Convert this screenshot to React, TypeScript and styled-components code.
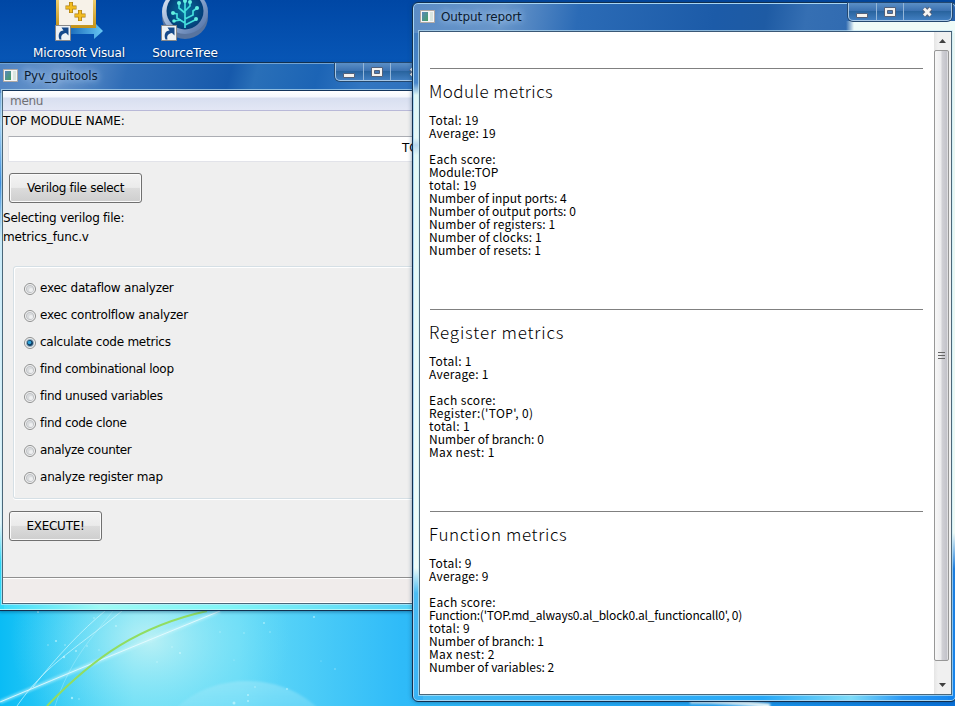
import React, { useState } from "react";
import styled, { createGlobalStyle, css } from "styled-components";

const GlobalStyle = createGlobalStyle`
  * { box-sizing: border-box; }
  html, body { margin: 0; padding: 0; overflow: hidden; }
  body { font-family: "DejaVu Sans", sans-serif; font-size: 12px; color: #000; }
`;

const Desktop = styled.main`
  position: relative;
  width: 955px;
  height: 706px;
  overflow: hidden;
  background: #0a58bb;
`;

const Wallpaper = styled.svg`
  position: absolute;
  inset: 0;
`;

const Shortcuts = styled.div`
  position: relative;
  display: flex;
  padding-left: 26px;
`;

const Shortcut = styled.div`
  width: 106px;
  display: flex;
  flex-direction: column;
  align-items: center;
  color: #fff;
  line-height: 16px;
  text-shadow: 0 1px 2px #002050;
  svg { display: block; height: 44px; margin-bottom: 1px; }
`;

const ShortcutLabel = styled.span<{ $track: number }>`
  letter-spacing: ${(p) => p.$track}px;
  white-space: nowrap;
`;

const Frame = styled.section<{ $report?: boolean }>`
  position: absolute;
  display: flex;
  flex-direction: column;
  border: 1px solid #12304f;
  ${(p) =>
    p.$report
      ? css`
          left: 412px; top: 2px; width: 545px; height: 700px;
          padding: 0 4px 6px 6px;
          border-radius: 6px;
          background:
            linear-gradient(90deg, transparent 433px, #effbf8 441px) 0 18px / 100% 12px no-repeat,
            linear-gradient(100deg, #5b8cc5 0, #6996ca 90px, #2b6bb6 165px, #1c5ba8 300px, #1e5ba4 350px, #356fb3 390px, #2862ac 100%) 0 0 / 100% 30px no-repeat,
            linear-gradient(180deg, #3f78bb 0, #4987ca 80px, #dff6f5 92px, #e5f7f6 135px, #b9d7ef 142px, #e3f8f6 152px, #eefbf8 565px, #4cbdf4 590px, #38b3f6 100%) 0 0 / 10px 100% no-repeat,
            linear-gradient(180deg, #e8f6f2 0, #eefaf5 530px, #1c7dde 566px, #1686ee 100%) right / 8px 100% no-repeat,
            linear-gradient(90deg, #47bdf5, #27a8f7 350px, #7edcf9 438px, #2b99f5 490px, #1686ed);
          box-shadow: inset 0 0 0 1px #a7d5f3, 0 0 4px #123c6688;
        `
      : css`
          left: -1px; top: 62px; width: 448px; height: 549px;
          padding: 0 6px 6px 2px;
          background:
            linear-gradient(105deg, #4f83c2 0, #6995cb 60px, #2f6db7 125px, #1659ab 225px, #296fb8 250px, #1c64b5 310px, #3276c1 355px, #2d70bc 100%) 0 0 / 100% 30px no-repeat,
            linear-gradient(180deg, #3675bd 0, #a6d2f4 60px, #3b8bda 120px, #c9eaf9 175px, #e6f7fa 460px, #28d4f4 500px, #33dafa 100%) 0 0 / 4px 100% no-repeat,
            linear-gradient(90deg, #3edcfb, #9efaf4 100px, #80f5f7 230px, #51cef7);
          box-shadow: inset 0 1px 0 #71a4d4, inset 0 -1px 0 #b2f6fa, 0 1px 3px #073a6580;
        `}
`;

const TitleBar = styled.header<{ $report?: boolean }>`
  height: ${(p) => (p.$report ? 28 : 27)}px;
  padding-right: ${(p) => (p.$report ? 0 : 1)}px;
  flex: none;
  display: flex;
  align-items: flex-start;
`;

const Caption = styled.div<{ $report?: boolean }>`
  display: flex;
  align-items: center;
  height: ${(p) => (p.$report ? 27 : 25)}px;
  gap: 6px;
  padding-left: 1px;
  flex: 1;
  color: #0b1b31;
  letter-spacing: -0.12px;
  text-shadow: 0 0 6px #a9c8ec, 0 0 9px #a9c8ec;
  svg { display: block; }
`;

const Controls = styled.div`
  display: flex;
  height: 18px;
  border: 1px solid #a7c7e5;
  border-top: 0;
  border-radius: 0 0 5px 5px;
  background: linear-gradient(#5b8fc6, #3a70b0 48%, #29649f 50%, #417ec0);
  box-shadow: 0 0 0 1px #24486f;
`;

const Control = styled.button<{ $w: number }>`
  width: ${(p) => p.$w}px;
  padding: 0 0 1px;
  border: 0;
  border-right: 1px solid #94b6d8;
  background: none;
  display: flex;
  align-items: center;
  justify-content: center;
  &:last-child { border-right: 0; }
`;

const Client = styled.div<{ $report?: boolean }>`
  flex: 1;
  min-height: 0;
  display: flex;
  flex-direction: ${(p) => (p.$report ? "row" : "column")};
  border: 1px solid #4b6779;
  border-top-color: ${(p) => (p.$report ? "#3a5876" : "#12345b")};
  background: ${(p) => (p.$report ? "#fff" : "#efefef")};
  box-shadow: 0 0 0 1px #c9ebf7a0;
`;

const MenuBar = styled.nav`
  height: 20px;
  flex: none;
  padding-left: 7px;
  border-bottom: 1px solid #b9b9d8;
  background: linear-gradient(#fff 0, #f4f7fd 6px, #d8dff0 7px, #e3e7f5 100%);
  color: #707074;
  line-height: 21px;
  letter-spacing: -0.3px;
`;

const Label = styled.div<{ $track: number }>`
  height: 19px;
  line-height: 21px;
  white-space: nowrap;
  letter-spacing: ${(p) => p.$track}px;
`;

const ModuleInput = styled.input`
  display: block;
  width: 423px;
  height: 26px;
  margin: 6px 0 11px 5px;
  padding: 0 4px 2px;
  border: 1px solid #e2e3e9;
  border-top-color: #abadb3;
  background: #fff;
  font: 12px "DejaVu Sans", sans-serif;
  text-align: right;
  outline: 0;
`;

const PushButton = styled.button<{ $w: number; $track: number }>`
  display: block;
  flex: none;
  width: ${(p) => p.$w}px;
  height: 30px;
  margin-left: 6px;
  padding: 0;
  border: 1px solid #707070;
  border-radius: 3px;
  background: linear-gradient(#f3f3f3, #ebebeb 48%, #dcdcdc 50%, #cecece);
  box-shadow: inset 0 0 0 1px #fafafa;
  font: 12px "DejaVu Sans", sans-serif;
  letter-spacing: ${(p) => p.$track}px;
  color: #000;
`;

const FileInfo = styled.div`
  padding-top: 5px;
`;

const Options = styled.div`
  width: 424px;
  height: 233px;
  flex: none;
  margin: 20px 0 12px 10px;
  padding: 7px 0 0 10px;
  border: 1px solid #d5dfe5;
  border-radius: 3px;
  box-shadow: inset 1px 1px 0 #fff, 0 1px 0 #fff;
`;

const Option = styled.div<{ $track: number }>`
  display: flex;
  align-items: center;
  gap: 4px;
  height: 27px;
  letter-spacing: ${(p) => p.$track}px;
  white-space: nowrap;
  svg { display: block; margin-top: 2px; }
`;

const StatusBar = styled.footer`
  height: 26px;
  margin-top: auto;
  border-top: 1px solid #8f8f8f;
  border-bottom: 1px solid #fff;
  background: #f0eceb;
  box-shadow: inset 0 1px 0 #fff;
`;

const Report = styled.article`
  flex: 1;
  padding: 36px 11px 0 10px;
  font-family: "Noto Sans CJK JP", sans-serif;
  font-weight: 400;
`;

const Section = styled.section<{ $h: number }>`
  height: ${(p) => p.$h}px;
  border-top: 1px solid #808080;
`;

const Heading = styled.h2<{ $track: number }>`
  margin: 12px 0 12px -1px;
  height: 20px;
  line-height: 20px;
  font-size: 17px;
  font-weight: 300;
  letter-spacing: ${(p) => p.$track}px;
`;

const Line = styled.div<{ $track?: number }>`
  height: 13px;
  margin-left: -1px;
  line-height: 13px;
  font-size: 12px;
  white-space: pre;
  letter-spacing: ${(p) => p.$track ?? 0.2}px;
`;

const ScrollBar = styled.div`
  width: 17px;
  padding-right: 1px;
  display: flex;
  flex-direction: column;
  background: linear-gradient(90deg, #e5e5e5, #f0f0f0 4px);
`;

const ScrollArrow = styled.div<{ $h: number }>`
  height: ${(p) => p.$h}px;
  flex: none;
  display: flex;
  align-items: center;
  justify-content: center;
`;

const Thumb = styled.div`
  width: 15px;
  flex: 1;
  display: flex;
  align-items: center;
  justify-content: center;
  border: 1px solid #979797;
  border-radius: 2px;
  background: linear-gradient(90deg, #f7f7f7 0, #ececee 45%, #d0d0d5 55%, #c3c3ca 90%, #eee 100%);
`;

const AppIcon = () => (
  <svg width="15" height="13" viewBox="0 0 15 13">
    <defs>
      <linearGradient id="pane" x2="1" y2="1">
        <stop stopColor="#5b86bd" /><stop offset="1" stopColor="#43a063" />
      </linearGradient>
    </defs>
    <path d="M.5.5h14v12H.5z" fill="#f4f5f6" stroke="#b0a9a4" />
    <path d="M2 2h6v9H2z" fill="url(#pane)" />
    <path d="M10 2h3v9h-3z" fill="#d9e5df" />
  </svg>
);

const WindowControls = () => (
  <Controls>
    <Control $w={28} aria-label="Minimize">
      <svg width="13" height="17"><path d="M.5 10.500h11v4h-11z" fill="#f6f3ef" stroke="#53617a" /></svg>
    </Control>
    <Control $w={27} aria-label="Maximize">
      <svg width="13" height="17">
        <path d="M.5 4.500h11v9h-11z" fill="#f6f3ef" stroke="#53617a" />
        <path d="M3.500 7.500h5v3h-5z" fill="#4a7bb6" stroke="#53617a" />
      </svg>
    </Control>
    <Control $w={47} aria-label="Close">
      <svg width="13" height="17">
        <path d="M3 5.500l6.500 7M9.500 5.500l-6.500 7" stroke="#53617a" strokeWidth="4.8" />
        <path d="M3 5.500l6.500 7M9.500 5.500l-6.500 7" stroke="#f8f5f2" strokeWidth="2.8" />
      </svg>
    </Control>
  </Controls>
);

const LinkArrow = () => (
  <g>
    <path d="M0 0h15v15H0z" fill="#eef2f5" stroke="#888" />
    <path d="M4 14C2 9 4 5 8 5L6 2h7v8L10.500 7.500C7 8 5 10 6 14z" fill="#164a8b" />
  </g>
);

const VisualStudioIcon = () => (
  <svg width="52" height="44" viewBox="1 0 52 44">
    <defs>
      <linearGradient id="arrow" x2="1"><stop stopColor="#1160b4" /><stop offset="1" stopColor="#67c8f4" /></linearGradient>
      <linearGradient id="gold" y2="1" x2="0"><stop stopColor="#f6d77b" /><stop offset="1" stopColor="#c39218" /></linearGradient>
    </defs>
    <path d="M14 27h29v-4l8 8-9 8v-5H14z" fill="url(#arrow)" />
    <path d="M4-5h40v33H4z" fill="url(#gold)" />
    <path d="M7-2h34v27H7z" fill="#f7f2e8" />
    <path d="M19 2v11M13.500 7.500h11M28 10v11M22.500 15.500h11" stroke="#a77b15" strokeWidth="4" />
    <path d="M19 2.500v10M14 7.500h10M28 10.500v10M23 15.500h10" stroke="#f3bd20" strokeWidth="2.600" />
    <g transform="translate(3.500 25.500)"><LinkArrow /></g>
  </svg>
);

const SourceTreeIcon = () => (
  <svg width="52" height="44" viewBox="1 0 52 44">
    <defs>
      <linearGradient id="rim" x2="1" y2="1"><stop stopColor="#eef3fb" /><stop offset=".5" stopColor="#8ea9d0" /><stop offset="1" stopColor="#4a6ba2" /></linearGradient>
      <radialGradient id="disc"><stop stopColor="#08719c" /><stop offset="1" stopColor="#033d78" /></radialGradient>
    </defs>
    <ellipse cx="27" cy="17" rx="23" ry="22" fill="#58749f" />
    <ellipse cx="27" cy="12" rx="23" ry="22" fill="url(#rim)" />
    <circle cx="27" cy="11" r="18.500" fill="url(#disc)" />
    <g fill="none" stroke="#45dfdc" strokeWidth="1.700" transform="translate(1 0)">
      <path d="M26 28V1M26 23l-8-5v-4l-4-1M26 19l8-4v-4l4-3M26 13l-6-5V3M26 11l5-5V2M26 25l10-5M22 20l-7 1" />
    </g>
    <g fill="#65f0e0" transform="translate(1 0)">
      <circle cx="14" cy="13" r="2" /><circle cx="38" cy="8" r="2" /><circle cx="20" cy="3" r="2" />
      <circle cx="31" cy="2" r="2" /><circle cx="37" cy="19" r="2" /><circle cx="15" cy="21" r="1.800" /><circle cx="26" cy="1" r="2" />
    </g>
    <g transform="translate(3.500 25.500)"><LinkArrow /></g>
  </svg>
);

const RadioIcon = ({ on }: { on: boolean }) => (
  <svg width="12" height="12" viewBox="0 0 12 12">
    <circle cx="6" cy="6" r="5.500" fill="#f5f5f5" stroke="#8e8f8f" />
    <circle cx="6" cy="6" r="3.700" fill={on ? "#b9d4e2" : "#d9dbdd"} stroke={on ? "#8299ab" : "#b4b8bb"} strokeWidth=".7" />
    {on ? (
      <><circle cx="6" cy="6" r="3" fill="#123f64" /><circle cx="5.500" cy="5.500" r="1.800" fill="#2fa6dc" /></>
    ) : (
      <circle cx="7" cy="7" r="2" fill="#eeeff0" />
    )}
  </svg>
);

const sparks = [
  [38, 612, 1], [56, 641, 1.1], [48, 645, .7], [65, 645, .8], [87, 646, .8], [99, 650, .7], [116, 626, .9],
  [94, 618, .8], [76, 651, 1], [64, 657, 1.2], [172, 647, .8], [180, 653, 1.1], [157, 662, .8], [264, 623, .9],
  [244, 633, .7], [314, 617, 1], [220, 632, .7], [270, 632, .7], [72, 698, 1.2], [79, 699, .7], [234, 703, 1.5],
  [248, 695, 1], [248, 701, 1], [255, 687, .8], [287, 689, .9], [234, 660, .6], [321, 661, .5], [335, 669, .7],
];

const Scenery = () => (
  <Wallpaper width="955" height="706" viewBox="0 0 955 706" aria-hidden="true">
    <defs>
      <linearGradient id="sky" x2="0" y2="1"><stop stopColor="#0047a5" /><stop offset=".1" stopColor="#0858b8" /><stop offset=".5" stopColor="#158bd9" /><stop offset="1" stopColor="#12b7f5" /></linearGradient>
      <linearGradient id="floor" x2="1"><stop stopColor="#0abcf5" /><stop offset=".14" stopColor="#63dcf6" /><stop offset=".25" stopColor="#63daf7" /><stop offset=".42" stopColor="#2fbbf8" /><stop offset=".72" stopColor="#20a4f5" /><stop offset="1" stopColor="#0872dc" /></linearGradient>
      <radialGradient id="glow"><stop stopColor="#c8f4f5" stopOpacity=".85" /><stop offset="1" stopColor="#7be5f8" stopOpacity="0" /></radialGradient>
      <linearGradient id="orb" x2="0" y2="1"><stop stopColor="#a7eafa" stopOpacity=".5" /><stop offset=".6" stopColor="#64d5f7" stopOpacity="0" /></linearGradient>
      <filter id="soft"><feGaussianBlur stdDeviation="1" /></filter>
    </defs>
    <path d="M0 0h955v706H0z" fill="url(#sky)" />
    <path d="M0 600h955v106H0z" fill="url(#floor)" />
    <ellipse cx="150" cy="640" rx="140" ry="115" fill="url(#glow)" />
    <ellipse cx="247" cy="756" rx="92" ry="75" fill="url(#orb)" filter="url(#soft)" />
    <path d="M0 702Q100 660 220 611" fill="none" stroke="#c9f6fb" strokeWidth="4" opacity=".55" filter="url(#soft)" />
    <path d="M0 702Q100 660 220 611" fill="none" stroke="#e7fcff" strokeWidth="1" opacity=".85" />
    <path d="M17 706C45 666 67 655 122 611M33 687C58 655 82 630 105 611" fill="none" stroke="#d7faff" opacity=".65" />
    <path d="M55 706C70 660 90 640 113 611" fill="none" stroke="#d7faff" opacity=".3" />
    <path d="M47 706C95 656 140 626 207 611" fill="none" stroke="#91dd60" strokeWidth="2" />
    <path d="M690 701C720 701 748 703 770 706" fill="none" stroke="#e8faff" strokeWidth="5" filter="url(#soft)" />
    <path d="M951 28h4v530h-4z" fill="#edf9f5" />
    {sparks.map(([x, y, r], i) => <circle key={i} cx={x} cy={y} r={r} fill="#d6fbff" opacity=".6" />)}
  </Wallpaper>
);

const options: [string, number][] = [
  ["exec dataflow analyzer", -0.23],
  ["exec controlflow analyzer", -0.21],
  ["calculate code metrics", -0.23],
  ["find combinational loop", -0.33],
  ["find unused variables", -0.31],
  ["find code clone", -0.33],
  ["analyze counter", -0.33],
  ["analyze register map", -0.21],
];

type ReportPart = { title: string; height: number; track: number; lines: [string, number?][] };

const report: ReportPart[] = [
  {
    title: "Module metrics", height: 241, track: 0.43,
    lines: [["Total: 19", 0.3], ["Average: 19", 0.3], [""], ["Each score:", 0.35], ["Module:TOP", 0.1], ["total: 19", 0.3],
      ["Number of input ports: 4", 0.03], ["Number of output ports: 0", 0.06], ["Number of registers: 1", 0.17],
      ["Number of clocks: 1", 0.14], ["Number of resets: 1", 0.2]],
  },
  {
    title: "Register metrics", height: 202, track: 0.85,
    lines: [["Total: 1", 0.3], ["Average: 1", 0.25], [""], ["Each score:", 0.35], ["Register:('TOP', 0)", 0.33], ["total: 1", 0.3],
      ["Number of branch: 0", 0.03], ["Max nest: 1", 0.35]],
  },
  {
    title: "Function metrics", height: 180, track: 0.62,
    lines: [["Total: 9", 0.3], ["Average: 9", 0.25], [""], ["Each score:", 0.35],
      ["Function:('TOP.md_always0.al_block0.al_functioncall0', 0)", -0.21], ["total: 9", 0.3],
      ["Number of branch: 1", 0.03], ["Max nest: 2", 0.35], ["Number of variables: 2", -0.02]],
  },
];

export default function App() {
  const [selected, setSelected] = useState(2);
  return (
    <>
      <GlobalStyle />
      <Desktop>
        <Scenery />
        <Shortcuts>
          <Shortcut><VisualStudioIcon /><ShortcutLabel $track={-0.15}>Microsoft Visual</ShortcutLabel></Shortcut>
          <Shortcut><SourceTreeIcon /><ShortcutLabel $track={-0.05}>SourceTree</ShortcutLabel></Shortcut>
        </Shortcuts>

        <Frame>
          <TitleBar>
            <Caption><AppIcon />Pyv_guitools</Caption>
            <WindowControls />
          </TitleBar>
          <Client>
            <MenuBar>menu</MenuBar>
            <Label $track={-0.08}>TOP MODULE NAME:</Label>
            <ModuleInput defaultValue="TOP" aria-label="Top module name" />
            <PushButton $w={133} $track={-0.3}>Verilog file select</PushButton>
            <FileInfo>
              <Label $track={-0.23}>Selecting verilog file:</Label>
              <Label $track={-0.15}>metrics_func.v</Label>
            </FileInfo>
            <Options role="radiogroup">
              {options.map(([name, track], i) => (
                <Option key={name} $track={track} role="radio" aria-checked={i === selected} onClick={() => setSelected(i)}>
                  <RadioIcon on={i === selected} />{name}
                </Option>
              ))}
            </Options>
            <PushButton $w={93} $track={-0.26}>EXECUTE!</PushButton>
            <StatusBar />
          </Client>
        </Frame>

        <Frame $report>
          <TitleBar $report>
            <Caption $report><AppIcon />Output report</Caption>
            <WindowControls />
          </TitleBar>
          <Client $report>
            <Report>
              {report.map((part) => (
                <Section key={part.title} $h={part.height}>
                  <Heading $track={part.track}>{part.title}</Heading>
                  {part.lines.map(([text, track], i) => <Line key={i} $track={track}>{text}</Line>)}
                </Section>
              ))}
            </Report>
            <ScrollBar>
              <ScrollArrow $h={18}><svg width="7" height="4"><path d="M3.500 0L7 4H0z" fill="#404040" /></svg></ScrollArrow>
              <Thumb><svg width="7" height="9"><path d="M0 1.500h7M0 4.500h7M0 7.500h7" stroke="#666" /></svg></Thumb>
              <ScrollArrow $h={33}><svg width="7" height="20"><path d="M0 15h7l-3.500 4z" fill="#404040" /></svg></ScrollArrow>
            </ScrollBar>
          </Client>
        </Frame>
      </Desktop>
    </>
  );
}
